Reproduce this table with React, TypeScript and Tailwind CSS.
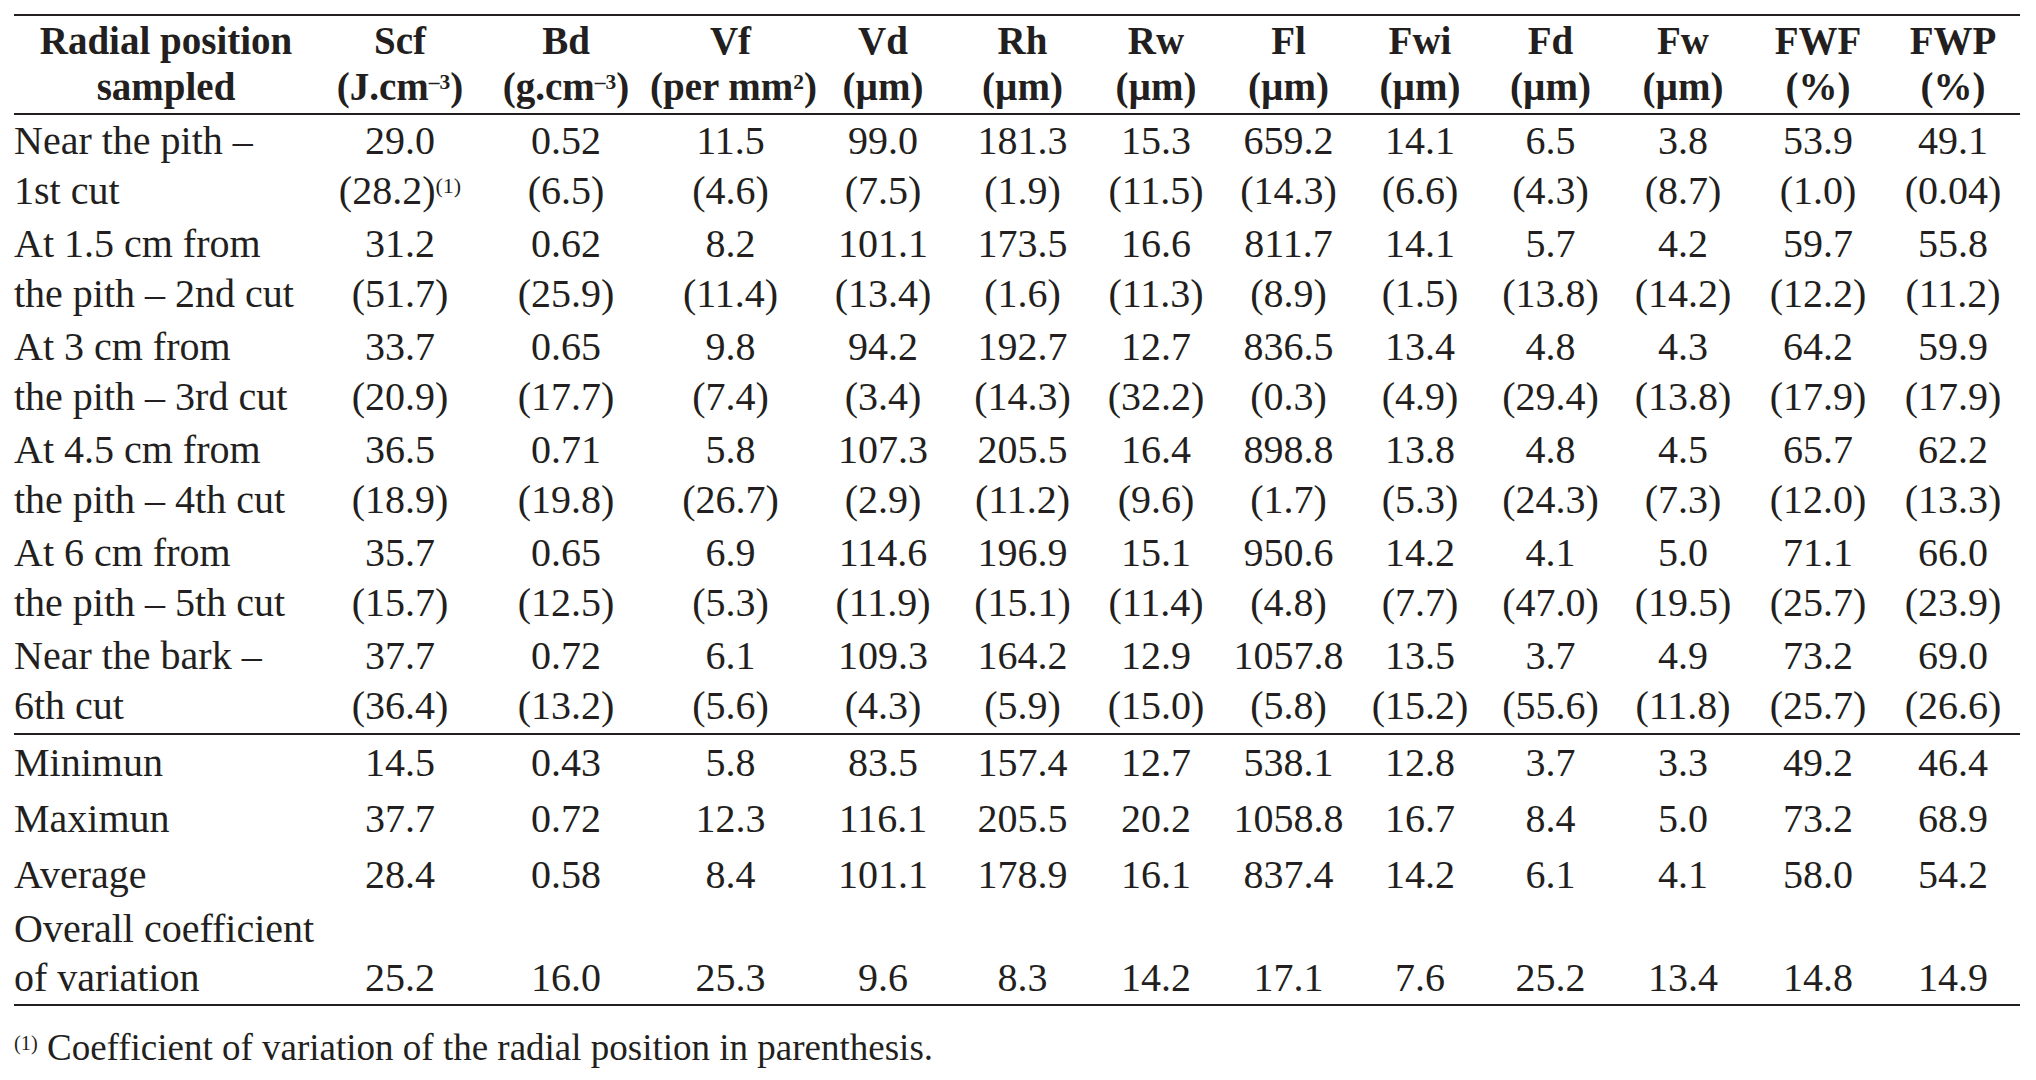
import React from 'react';

type DataRow = {
  label: [string, string];
  values: [React.ReactNode, React.ReactNode][];
};

const COL_WIDTHS = [
  'w-[304px]',
  'w-[164px]',
  'w-[168px]',
  'w-[161px]',
  'w-[144px]',
  'w-[135px]',
  'w-[132px]',
  'w-[133px]',
  'w-[130px]',
  'w-[131px]',
  'w-[134px]',
  'w-[136px]',
  'w-[134px]',
];

const HEADERS: [string, React.ReactNode][] = [
  ['Scf', <>(J.cm<sup className="text-[0.55em]">–3</sup>)</>],
  ['Bd', <>(g.cm<sup className="text-[0.55em]">–3</sup>)</>],
  ['Vf', <>(per mm<sup className="text-[0.55em]">2</sup>)</>],
  ['Vd', '(µm)'],
  ['Rh', '(µm)'],
  ['Rw', '(µm)'],
  ['Fl', '(µm)'],
  ['Fwi', '(µm)'],
  ['Fd', '(µm)'],
  ['Fw', '(µm)'],
  ['FWF', '(%)'],
  ['FWP', '(%)'],
];

const pair = (line: string, cv: string): [string, string] => [line, cv];

const ROWS: DataRow[] = [
  {
    label: ['Near the pith –', '1st cut'],
    values: [
      ['29.0', <>(28.2)<sup className="text-[0.55em]">(1)</sup></>],
      pair('0.52', '(6.5)'),
      pair('11.5', '(4.6)'),
      pair('99.0', '(7.5)'),
      pair('181.3', '(1.9)'),
      pair('15.3', '(11.5)'),
      pair('659.2', '(14.3)'),
      pair('14.1', '(6.6)'),
      pair('6.5', '(4.3)'),
      pair('3.8', '(8.7)'),
      pair('53.9', '(1.0)'),
      pair('49.1', '(0.04)'),
    ],
  },
  {
    label: ['At 1.5 cm from', 'the pith – 2nd cut'],
    values: [
      pair('31.2', '(51.7)'),
      pair('0.62', '(25.9)'),
      pair('8.2', '(11.4)'),
      pair('101.1', '(13.4)'),
      pair('173.5', '(1.6)'),
      pair('16.6', '(11.3)'),
      pair('811.7', '(8.9)'),
      pair('14.1', '(1.5)'),
      pair('5.7', '(13.8)'),
      pair('4.2', '(14.2)'),
      pair('59.7', '(12.2)'),
      pair('55.8', '(11.2)'),
    ],
  },
  {
    label: ['At 3 cm from', 'the pith – 3rd cut'],
    values: [
      pair('33.7', '(20.9)'),
      pair('0.65', '(17.7)'),
      pair('9.8', '(7.4)'),
      pair('94.2', '(3.4)'),
      pair('192.7', '(14.3)'),
      pair('12.7', '(32.2)'),
      pair('836.5', '(0.3)'),
      pair('13.4', '(4.9)'),
      pair('4.8', '(29.4)'),
      pair('4.3', '(13.8)'),
      pair('64.2', '(17.9)'),
      pair('59.9', '(17.9)'),
    ],
  },
  {
    label: ['At 4.5 cm from', 'the pith – 4th cut'],
    values: [
      pair('36.5', '(18.9)'),
      pair('0.71', '(19.8)'),
      pair('5.8', '(26.7)'),
      pair('107.3', '(2.9)'),
      pair('205.5', '(11.2)'),
      pair('16.4', '(9.6)'),
      pair('898.8', '(1.7)'),
      pair('13.8', '(5.3)'),
      pair('4.8', '(24.3)'),
      pair('4.5', '(7.3)'),
      pair('65.7', '(12.0)'),
      pair('62.2', '(13.3)'),
    ],
  },
  {
    label: ['At 6 cm from', 'the pith – 5th cut'],
    values: [
      pair('35.7', '(15.7)'),
      pair('0.65', '(12.5)'),
      pair('6.9', '(5.3)'),
      pair('114.6', '(11.9)'),
      pair('196.9', '(15.1)'),
      pair('15.1', '(11.4)'),
      pair('950.6', '(4.8)'),
      pair('14.2', '(7.7)'),
      pair('4.1', '(47.0)'),
      pair('5.0', '(19.5)'),
      pair('71.1', '(25.7)'),
      pair('66.0', '(23.9)'),
    ],
  },
  {
    label: ['Near the bark –', '6th cut'],
    values: [
      pair('37.7', '(36.4)'),
      pair('0.72', '(13.2)'),
      pair('6.1', '(5.6)'),
      pair('109.3', '(4.3)'),
      pair('164.2', '(5.9)'),
      pair('12.9', '(15.0)'),
      pair('1057.8', '(5.8)'),
      pair('13.5', '(15.2)'),
      pair('3.7', '(55.6)'),
      pair('4.9', '(11.8)'),
      pair('73.2', '(25.7)'),
      pair('69.0', '(26.6)'),
    ],
  },
];

const SUMMARY: [string, string[]][] = [
  ['Minimun', ['14.5', '0.43', '5.8', '83.5', '157.4', '12.7', '538.1', '12.8', '3.7', '3.3', '49.2', '46.4']],
  ['Maximun', ['37.7', '0.72', '12.3', '116.1', '205.5', '20.2', '1058.8', '16.7', '8.4', '5.0', '73.2', '68.9']],
  ['Average', ['28.4', '0.58', '8.4', '101.1', '178.9', '16.1', '837.4', '14.2', '6.1', '4.1', '58.0', '54.2']],
];

const OVERALL = ['25.2', '16.0', '25.3', '9.6', '8.3', '14.2', '17.1', '7.6', '25.2', '13.4', '14.8', '14.9'];

export default function App() {
  return (
    <div className="min-h-screen bg-white pl-[14px] pt-[14px] text-[#231f20] font-['Liberation_Serif','Times_New_Roman',serif]">
      <table className="w-[2006px] table-fixed border-collapse text-[40px]">
        <colgroup>
          {COL_WIDTHS.map((w, i) => (
            <col key={i} className={w} />
          ))}
        </colgroup>
        <thead>
          <tr className="border-y-2 border-[#231f20] text-[39px] font-bold leading-[46px]">
            <th className="p-0 pt-[2px] pb-[3px] text-center align-top font-bold">
              <span className="block">Radial position</span>
              <span className="block">sampled</span>
            </th>
            {HEADERS.map(([name, unit]) => (
              <th key={name} className="p-0 pt-[2px] pb-[3px] text-center align-top font-bold whitespace-nowrap">
                <span className="block">{name}</span>
                <span className="block">{unit}</span>
              </th>
            ))}
          </tr>
        </thead>
        <tbody className="leading-[50px]">
          {ROWS.map((row, ri) => (
            <tr
              key={ri}
              className={ri === ROWS.length - 1 ? 'border-b-2 border-[#231f20]' : ''}
            >
              <td className="p-0 pt-[1px] pb-[2px] text-left align-top whitespace-nowrap">
                <span className="block">{row.label[0]}</span>
                <span className="block">{row.label[1]}</span>
              </td>
              {row.values.map(([v, cv], ci) => (
                <td key={ci} className="p-0 pt-[1px] pb-[2px] text-center align-top whitespace-nowrap">
                  <span className="block">{v}</span>
                  <span className="block">{cv}</span>
                </td>
              ))}
            </tr>
          ))}
          {SUMMARY.map(([label, vals]) => (
            <tr key={label} className="leading-[56px]">
              <td className="p-0 text-left">{label}</td>
              {vals.map((v, ci) => (
                <td key={ci} className="p-0 text-center">
                  {v}
                </td>
              ))}
            </tr>
          ))}
          <tr className="border-b-2 border-[#231f20] leading-[49px]">
            <td className="p-0 pt-[1px] pb-[2px] text-left align-top whitespace-nowrap">
              <span className="block">Overall coefficient</span>
              <span className="block">of variation</span>
            </td>
            {OVERALL.map((v, ci) => (
              <td key={ci} className="p-0 pb-[2px] text-center align-bottom">
                {v}
              </td>
            ))}
          </tr>
        </tbody>
      </table>
      <p className="mt-[18px] text-[37px] leading-[48px]">
        <sup className="text-[0.55em]">(1)</sup> Coefficient of variation of the radial position in parenthesis.
      </p>
    </div>
  );
}
